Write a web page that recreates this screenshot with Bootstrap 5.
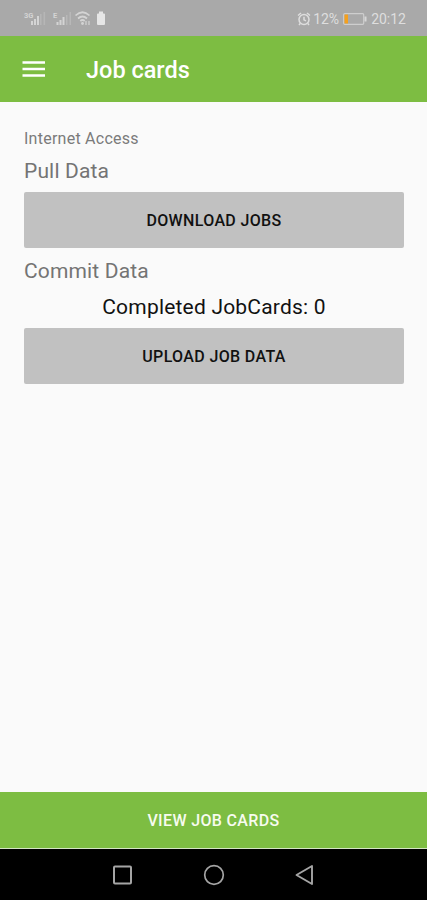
<!DOCTYPE html>
<html lang="en">
<head>
<meta charset="utf-8">
<meta name="viewport" content="width=device-width, initial-scale=1">
<title>Job cards</title>
<link href="https://cdn.jsdelivr.net/npm/bootstrap@5.3.0/dist/css/bootstrap.min.css" rel="stylesheet">
<style>
body { font-family: Roboto, "Liberation Sans", sans-serif; background: #fafafa; color: #111; }
.status-bar { height: 36px; background: #a9a9a9; color: #dedede; font-size: 14px; line-height: 34px; padding: 2px 21px 0 24px; }
.battery-pct { margin-left: 2px; }
.app-bar { height: 66px; background: #7dbd42; padding: 2px 22px 0; }
.app-title { font-size: 23.500px; font-weight: 500; line-height: 32px; margin-left: 40px; }
.content { padding: 26px 23px 0 24px; }
.label-sm { font-size: 16px; line-height: 22px; letter-spacing: .25px; color: #7b7b7b; }
.label-lg { font-size: 21px; line-height: 30px; letter-spacing: .15px; color: #747474; }
.count { font-size: 21px; line-height: 26px; padding-bottom: 4px; letter-spacing: .2px; }
.btn-job, .btn-view { font-size: 16px; font-weight: 500; letter-spacing: .35px; border: 0; padding: 8px 12px 6px; }
.btn-job { height: 56px; background: #c1c1c1; color: #111; border-radius: 2px; }
.btn-view { height: 57px; background: #7dbd42; color: #f7fbef; border-radius: 0; border-bottom: 1px solid #d5e5c4; }
.system-nav { height: 51px; background: #000; padding: 1px 112px 0; }
</style>
</head>
<body>
<div class="d-flex flex-column vh-100 overflow-hidden">
  <div class="status-bar d-flex justify-content-between align-items-center flex-shrink-0">
    <svg width="84" height="20" viewBox="24 9 84 20" fill="#d4d4d4">
      <text x="24" y="18" font-size="7.500" font-weight="700">3G</text>
      <path d="M31 21h2v4h-2zM34 19h2v6h-2zM37 16h2v9h-2z"/>
      <path d="M40 14h1.6v11H40zM43.5 12h1.6v13h-1.6z" opacity=".3"/>
      <text x="53" y="18" font-size="7.500" font-weight="700">E</text>
      <path d="M56.500 22h2v3h-2zM59.500 20h2v5h-2zM62.500 17h2v8h-2z"/>
      <path d="M66 15h1.500v10H66zM69.500 12h1.500v13h-1.500z" opacity=".35"/>
      <g fill="none" stroke="#d4d4d4" stroke-width="1.700"><path d="M75.500 15.500Q82.500 9 89.500 15.500M78 18.500Q82.500 14.500 87 18.500M80.300 21Q82.500 19 84.700 21"/></g>
      <circle cx="82.500" cy="23.500" r="1.400"/><path d="M86 21v4M89 21v4" stroke="#d4d4d4" stroke-width="1.200"/>
      <path d="M99 11.500h4v2h1q1 0 1 1V24q0 1-1 1h-6q-1 0-1-1v-9.500q0-1 1-1h1z" fill="#e6e6e6"/>
    </svg>
    <div class="d-flex align-items-center">
      <svg width="14" height="14" viewBox="0 0 14 14" fill="none" stroke="#dedede" stroke-width="1.500"><circle cx="7" cy="7.500" r="5"/><path d="M7 4.800v3l2 1M1 3.500L4 1M13 3.500L10 1M3.200 11.500L2 13M10.800 11.500L12 13"/></svg>
      <span class="battery-pct">12%</span>
      <svg class="mx-1" width="24" height="14" viewBox="0 0 24 14"><rect x=".7" y="1.700" width="20" height="10.600" rx="1" fill="none" stroke="#cecece" stroke-width="1.200"/><path d="M1.500 2.500H5v9H1.500z" fill="#f5a01d"/><path d="M21.500 4.500h2v5h-2z" fill="#d7d7d7"/></svg>
      <span>20:12</span>
    </div>
  </div>
  <header class="app-bar d-flex align-items-center flex-shrink-0 text-white">
    <svg width="24" height="18" viewBox="0 0 24 18" fill="none" stroke="#fff" stroke-width="2.300"><path d="M.5 1.500h22.500M.5 8h22.500M.5 14.500h22.500"/></svg>
    <h1 class="app-title mb-0">Job cards</h1>
  </header>
  <main class="content flex-grow-1">
    <div class="label-sm">Internet Access</div>
    <div class="label-lg mt-1 pt-1 mb-1 lh-sm">Pull Data</div>
    <div class="pt-1"><button type="button" class="btn btn-job w-100 d-block">DOWNLOAD JOBS</button></div>
    <div class="label-lg mt-2">Commit Data</div>
    <div class="count text-center mt-1 pt-1 mb-1">Completed JobCards: 0</div>
    <button type="button" class="btn btn-job w-100 d-block">UPLOAD JOB DATA</button>
  </main>
  <button type="button" class="btn btn-view w-100 flex-shrink-0">VIEW JOB CARDS</button>
  <nav class="system-nav d-flex justify-content-between align-items-center flex-shrink-0">
    <svg width="21" height="22" viewBox="0 0 21 22" fill="none" stroke="#a5a5a5" stroke-width="2"><rect x="2" y="2.500" width="17" height="17" rx="1"/></svg>
    <svg width="22" height="22" viewBox="0 0 22 22" fill="none" stroke="#a5a5a5" stroke-width="1.700"><circle cx="11" cy="11" r="9.300"/></svg>
    <svg width="21" height="22" viewBox="0 0 21 22" fill="none" stroke="#a5a5a5" stroke-width="1.900" stroke-linejoin="round"><path d="M18 2v18L2.500 11z"/></svg>
  </nav>
</div>
<script src="https://cdn.jsdelivr.net/npm/bootstrap@5.3.0/dist/js/bootstrap.bundle.min.js"></script>
</body>
</html>
